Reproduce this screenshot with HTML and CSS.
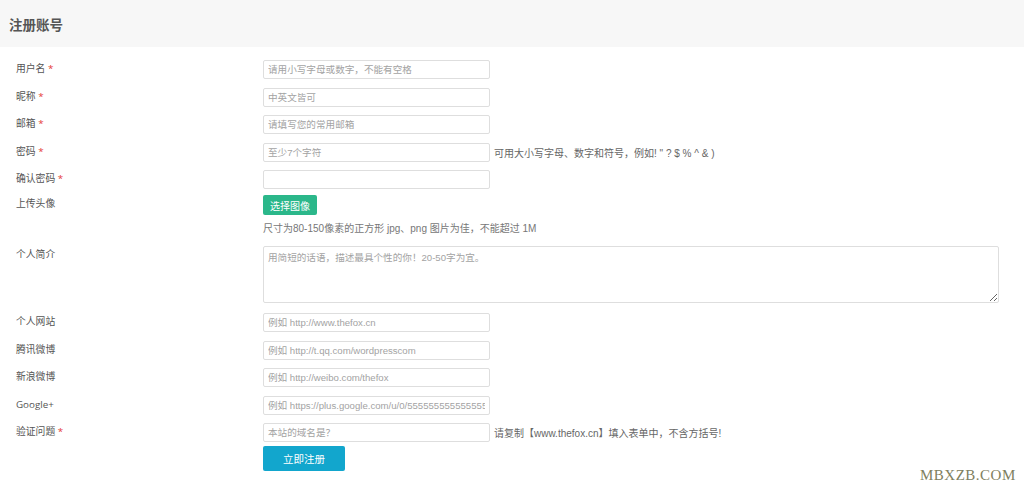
FILE: index.html
```html
<!DOCTYPE html>
<html lang="zh-CN">
<head>
<meta charset="utf-8">
<title>注册账号</title>
<link rel="stylesheet" href="styles.css">
</head>
<body>
<header class="page-head"><h1>注册账号</h1></header>
<form class="reg-form">
  <div class="row"><label class="lbl">用户名 <i>*</i></label><div class="field"><input type="text" placeholder="请用小写字母或数字，不能有空格"></div></div>
  <div class="row"><label class="lbl">昵称 <i>*</i></label><div class="field"><input type="text" placeholder="中英文皆可"></div></div>
  <div class="row"><label class="lbl">邮箱 <i>*</i></label><div class="field"><input type="text" placeholder="请填写您的常用邮箱"></div></div>
  <div class="row"><label class="lbl">密码 <i>*</i></label><div class="field"><input type="text" placeholder="至少7个字符"><span class="hint">可用大小写字母、数字和符号，例如! " ? $ % ^ &amp; )</span></div></div>
  <div class="row"><label class="lbl">确认密码 <i>*</i></label><div class="field"><input type="text"></div></div>
  <div class="row row-upload"><label class="lbl">上传头像</label><div class="field col"><button type="button" class="btn-pick">选择图像</button><p class="help">尺寸为80-150像素的正方形 jpg、png 图片为佳，不能超过 1M</p></div></div>
  <div class="row row-bio"><label class="lbl">个人简介</label><div class="field"><textarea placeholder="用简短的话语，描述最具个性的你！20-50字为宜。"></textarea></div></div>
  <div class="row"><label class="lbl">个人网站</label><div class="field"><input type="text" placeholder="例如 http://www.thefox.cn"></div></div>
  <div class="row"><label class="lbl">腾讯微博</label><div class="field"><input type="text" placeholder="例如 http://t.qq.com/wordpresscom"></div></div>
  <div class="row"><label class="lbl">新浪微博</label><div class="field"><input type="text" placeholder="例如 http://weibo.com/thefox"></div></div>
  <div class="row"><label class="lbl">Google+</label><div class="field"><input type="text" placeholder="例如 https://plus.google.com/u/0/555555555555555555555"></div></div>
  <div class="row"><label class="lbl">验证问题 <i>*</i></label><div class="field"><input type="text" placeholder="本站的域名是？"><span class="hint">请复制【www.thefox.cn】填入表单中，不含方括号!</span></div></div>
  <div class="row row-submit"><span class="lbl"></span><div class="field"><button type="submit" class="btn-submit">立即注册</button></div></div>
</form>
<div class="watermark">MBXZB.COM</div>
</body>
</html>
```
FILE: styles.css
```css
html, body {
  margin: 0;
  padding: 0;
  background: #fff;
}
body {
  font-family: "Liberation Sans", "Noto Sans CJK SC", sans-serif;
  font-size: 10px;
  color: #555;
  position: relative;
  height: 486px;
  overflow: hidden;
}
.page-head {
  background: #f7f7f7;
  height: 47px;
  display: flex;
  align-items: center;
  padding-left: 9px;
}
.page-head h1 {
  margin: 0;
  font-size: 13.5px;
  font-weight: bold;
  color: #555;
  line-height: 1;
  position: relative;
  top: 2px;
}
.reg-form {
  padding-top: 13px;
  padding-left: 16px;
}
.row {
  display: flex;
  align-items: flex-start;
  margin-bottom: 8.5px;
}
.lbl {
  width: 247px;
  flex: none;
  line-height: 17px;
  font-family: "Open Sans", "Noto Sans CJK SC", sans-serif;
  font-size: 9.8px;
  color: #555;
}
.lbl i {
  font-style: normal;
  color: #e53935;
}
.field {
  display: flex;
  align-items: center;
}
.field.col {
  flex-direction: column;
  align-items: flex-start;
}
input {
  box-sizing: border-box;
  width: 227px;
  height: 19px;
  border: 1px solid #dedede;
  border-radius: 2px;
  padding: 0 4px;
  font-family: "Liberation Sans", "Noto Sans CJK SC", sans-serif;
  font-size: 9.6px;
  color: #555;
  background: #fff;
  outline: none;
}
input::placeholder, textarea::placeholder {
  color: #a3a3a3;
}
.hint {
  margin-left: 4px;
  font-size: 10px;
  color: #666;
  white-space: nowrap;
}
.btn-pick {
  height: 20px;
  width: 54px;
  border: none;
  border-radius: 2px;
  background: #2bb78a;
  color: #fff;
  font-family: "Liberation Sans", "Noto Sans CJK SC", sans-serif;
  font-size: 10px;
  padding: 0;
}
.help {
  margin: 7px 0 0;
  font-size: 10px;
  line-height: 14px;
  color: #777;
}
.row-upload {
  margin-top: -2.5px;
  margin-bottom: 10px;
}
textarea {
  box-sizing: border-box;
  width: 736px;
  height: 57px;
  border: 1px solid #dedede;
  border-radius: 2px;
  padding: 3px 4px;
  font-family: "Liberation Sans", "Noto Sans CJK SC", sans-serif;
  font-size: 9.6px;
  color: #555;
  resize: vertical;
  outline: none;
  display: block;
}
.row-bio {
  margin-bottom: 10px;
}
.lbl:empty {
  height: 1px;
}
.row-submit {
  margin-top: -5px;
}
.btn-submit {
  width: 82px;
  height: 25px;
  border: none;
  border-radius: 2px;
  background: #12a6cd;
  color: #fff;
  font-family: "Liberation Sans", "Noto Sans CJK SC", sans-serif;
  font-size: 10.5px;
  padding: 0;
}
.watermark {
  position: absolute;
  left: 920px;
  top: 467px;
  font-family: "Liberation Serif", "DejaVu Serif", serif;
  font-size: 15px;
  color: #80805e;
  letter-spacing: 0.5px;
}
```
